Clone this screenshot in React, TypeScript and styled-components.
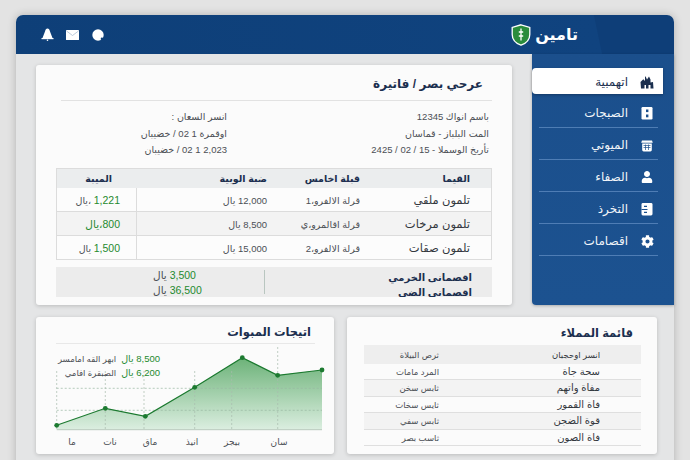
import * as React from 'react';
import styled, {createGlobalStyle} from 'styled-components';
import {FaCog, FaUser} from 'react-icons/fa';

const NAVY = '#1b2f4f';
const GREEN = '#1f8a2f';

const GlobalStyle = createGlobalStyle`
    html, body {
        margin: 0;
        height: 460px;
        overflow: hidden;
        background: #e3e3e3;
        font-family: "Liberation Sans", "DejaVu Sans", sans-serif;
    }
`;

const Window = styled.div`
    margin: 15px 16px 0;
    height: 460px;
    background: #e4e5e6;
    border-radius: 7px 7px 0 0;
    box-shadow: 0 0 8px rgba(0, 0, 0, 0.22);
    direction: rtl;
`;

const Header = styled.header`
    height: 39px;
    display: flex;
    align-items: center;
    justify-content: space-between;
    padding: 0 96px 0 25px;
    border-radius: 7px 7px 0 0;
    background: linear-gradient(258deg, #0e3e78 0, #0e3e78 78px, #10437f 79px, #0e3f78 100%);
`;

const Brand = styled.div`
    display: flex;
    align-items: center;
    gap: 4px;
    color: #fff;
    font-size: 16px;
    font-weight: bold;
`;

const HeaderIcons = styled.div`
    direction: ltr;
    display: flex;
    align-items: center;
    gap: 12px;
`;

const TopRow = styled.div`
    display: flex;
    align-items: flex-start;
`;

const Sidebar = styled.nav`
    width: 142px;
    height: 251px;
    box-sizing: border-box;
    padding-top: 14px;
    background: linear-gradient(180deg, #1b4f8c, #1c5290);
    border-radius: 0 0 0 4px;
    box-shadow: 0 1px 3px rgba(0, 0, 0, 0.25);
`;

const NavItem = styled.div<{$active?: boolean}>`
    display: flex;
    align-items: center;
    gap: 12px;
    box-sizing: border-box;
    height: ${p => (p.$active ? '26px' : '32px')};
    margin: ${p => (p.$active ? '0 11px 2px 0' : '0')};
    padding: 2px 20px 0 0;
    background: ${p => (p.$active ? '#fff' : 'transparent')};
    border-radius: ${p => (p.$active ? '4px 0 0 4px' : '0')};
    box-shadow: ${p => (p.$active ? '0 1px 3px rgba(0, 0, 0, 0.3)' : 'none')};
    color: ${p => (p.$active ? NAVY : '#f2f5f9')};
    font-size: 12px;
    position: relative;
    &::after {
        content: '';
        display: ${p => (p.$active ? 'none' : 'block')};
        position: absolute;
        left: 7px;
        right: 16px;
        bottom: 0;
        height: 1px;
        background: rgba(130, 170, 220, 0.5);
    }
`;

const NavIcon = styled.span<{$active?: boolean}>`
    width: 14px;
    display: flex;
    justify-content: center;
    color: ${p => (p.$active ? NAVY : '#fff')};
    margin-right: ${p => (p.$active ? '-11px' : '0')};
`;

const InvoiceCard = styled.section`
    width: 476px;
    height: 240px;
    box-sizing: border-box;
    margin: 11px 20px 0 0;
    padding: 0 20px;
    background: #fbfbfb;
    border-radius: 3px;
    box-shadow: 0 1px 4px rgba(0, 0, 0, 0.18);
`;

const InvoiceTitle = styled.h1`
    margin: 0 0 0 5px;
    height: 35px;
    padding-right: 9px;
    line-height: 38px;
    font-size: 12px;
    font-weight: bold;
    color: ${NAVY};
    border-bottom: 1px solid #e2e2e2;
`;

const InfoGrid = styled.div`
    display: grid;
    grid-template-columns: 262px 1fr;
    padding: 8px 3px 0 0;
    height: 59px;
`;

const InfoCol = styled.div`
    display: flex;
    flex-direction: column;
    font-size: 9.5px;
    line-height: 16.5px;
    color: #4b4f55;
`;

const Table = styled.div`
    display: grid;
    grid-template-columns: 121px 93px 140px 80px;
    border: 1px solid #dcdcdc;
    border-bottom: 0;
`;

const HeadCell = styled.div`
    height: 19px;
    line-height: 20px;
    padding-right: 10px;
    background: #ebedee;
    color: ${NAVY};
    font-size: 9.5px;
    font-weight: bold;
    &:nth-child(4n + 1) {
        padding-right: 21px;
    }
    &:nth-child(4n) {
        padding-right: 25px;
    }
`;

const Cell = styled.div<{$shade?: boolean; $big?: boolean; $sep?: boolean}>`
    height: 24px;
    box-sizing: border-box;
    line-height: 25px;
    padding-right: 10px;
    border-bottom: 1px solid #dcdcdc;
    border-right: ${p => (p.$sep ? '1px solid #dcdcdc' : '0')};
    background: ${p => (p.$shade ? '#f3f3f3' : '#fcfcfc')};
    color: ${p => (p.$big ? '#33383f' : '#4b4f55')};
    font-size: ${p => (p.$big ? '11.5px' : '9.5px')};
    white-space: nowrap;
    &:nth-child(4n + 1) {
        padding-right: 21px;
    }
    &:nth-child(4n) {
        padding-right: 16px;
    }
`;

const Money = styled.span`
    color: ${GREEN};
    font-size: 10.5px;
`;

const Summary = styled.div`
    margin-top: 7px;
    height: 30px;
    overflow: hidden;
    display: grid;
    grid-template-columns: 228px 1fr;
    background: #ececec;
`;

const SummaryLabels = styled.div`
    padding-right: 20px;
    border-left: 1px solid #b9c6c0;
    height: 24px;
    margin-top: 3px;
    color: ${NAVY};
    font-size: 10px;
    font-weight: bold;
    line-height: 15px;
    white-space: nowrap;
`;

const SummaryValues = styled.div`
    display: flex;
    flex-direction: column;
    align-items: flex-end;
    padding: 1px 0 0 97px;
    font-size: 10.5px;
    line-height: 15px;
    color: #4b4f55;
    white-space: nowrap;
`;

const BottomRow = styled.div`
    display: flex;
    gap: 13px;
    margin-top: 12px;
    padding: 0 17px 0 20px;
`;

const Card = styled.section<{$width: number}>`
    width: ${p => p.$width}px;
    height: 137px;
    background: #fbfbfb;
    border-radius: 3px;
    box-shadow: 0 1px 4px rgba(0, 0, 0, 0.18);
    position: relative;
    overflow: hidden;
`;

const ChartTitle = styled.h2`
    margin: 0 19px 0 20px;
    height: 26px;
    padding-right: 4px;
    line-height: 31px;
    border-bottom: 1px solid #e8e8e8;
    color: ${NAVY};
    font-size: 11.5px;
    font-weight: bold;
`;

const ChartSvg = styled.svg`
    display: block;
`;

const Legend = styled.div`
    position: absolute;
    left: 22px;
    top: 35px;
    width: 102px;
    display: flex;
    flex-direction: column;
    font-size: 8.5px;
    line-height: 14px;
    color: #4b4f55;
    white-space: nowrap;
`;

const LegendRow = styled.div`
    display: flex;
    gap: 5px;
`;

const LegendValue = styled.span`
    color: ${GREEN};
    font-size: 9.5px;
`;

const CustomersTitle = styled.h2`
    margin: 0;
    height: 28px;
    padding-right: 24px;
    line-height: 32px;
    color: ${NAVY};
    font-size: 11.5px;
    font-weight: bold;
`;

const CustomerTable = styled.div`
    margin: 0 16px 0 17px;
    display: grid;
    grid-template-columns: 193px 84px;
`;

const CustomerCell = styled.div<{$head?: boolean; $shade?: boolean}>`
    height: ${p => (p.$head ? '19px' : '16.4px')};
    box-sizing: border-box;
    line-height: ${p => (p.$head ? '20px' : '16px')};
    padding-right: 9px;
    background: ${p => (p.$head ? '#eeeeee' : p.$shade ? '#f3f3f3' : '#fbfbfb')};
    border-bottom: 1px solid ${p => (p.$head ? '#eeeeee' : '#dfdfdf')};
    color: #4b4f55;
    font-size: 8.5px;
    white-space: nowrap;
    &:nth-child(odd) {
        padding-right: 41px;
        color: #33383f;
        font-size: ${p => (p.$head ? '8.5px' : '10px')};
    }
`;

const navItems = [
    {label: 'الصبجات', icon: 'doc'},
    {label: 'الميوتي', icon: 'bin'},
    {label: 'الصفاء', icon: 'user'},
    {label: 'التخرذ', icon: 'box'},
    {label: 'اقصامات', icon: 'gear'}
];

const invoiceRows = [
    {name: 'تلمون ملقي', place: 'قرلة الالفرو،1', price: '12,000 يال', profit: '1,221', unit: ' ،يال', green: false},
    {name: 'تلمون مرخات', place: 'قرلة اقالمرو،ي', price: '8,500 يال', profit: '800،يال', unit: '', green: true},
    {name: 'تلمون صقات', place: 'قرلة الالفرو،2', price: '15,000 يال', profit: '1,500', unit: ' يال', green: false}
];

const customers = [
    ['سحة جاة', 'المرد مامات'],
    ['مفاة واتهم', 'ثابس سخن'],
    ['فاة القمور', 'ثايس سخات'],
    ['قوة الضجن', 'ثابس سفي'],
    ['فاة الصون', 'ثاسب بصر']
];

const chartPoints = [
    [20.7, 81.3],
    [69.3, 64.3],
    [109.3, 72.3],
    [158.7, 43.3],
    [206.3, 13.7],
    [241.7, 31.3],
    [286, 26]
];

const axisLabels = [
    ['ما', 36],
    ['نات', 74],
    ['ماق', 114],
    ['انيذ', 156],
    ['بيجز', 196],
    ['سان', 243]
] as const;

const gridX = [20.7, 69.3, 108, 158.7, 195.7, 241.7];

function NavGlyph({name}: {name: string}): JSX.Element {
    if (name === 'user') {
        return <FaUser size={12} />;
    }
    if (name === 'gear') {
        return <FaCog size={13} />;
    }
    if (name === 'doc') {
        return (
            <svg width="12" height="13" viewBox="0 0 12 13">
                <rect width="11" height="12.5" x="0.5" rx="1.2" fill="#fff" />
                <rect x="5" y="2.5" width="2.4" height="2.6" fill="#1b4f8c" />
                <rect x="5" y="7.5" width="2.4" height="2.8" fill="#1b4f8c" />
            </svg>
        );
    }
    if (name === 'bin') {
        return (
            <svg width="12" height="13" viewBox="0 0 12 13">
                <path d="M1 1.5h10l.8 2.2H.2z" fill="#fff" />
                <path d="M1.2 4.5h9.6v6.5a1.4 1.4 0 0 1-1.4 1.4H2.6A1.4 1.4 0 0 1 1.2 11z" fill="#fff" />
                <path d="M2.5 6.5h7M2.5 8.5h7M4.5 5.5v5.5M7.5 5.5v5.5" stroke="#1b4f8c" strokeWidth="0.7" />
            </svg>
        );
    }
    return (
        <svg width="12" height="13" viewBox="0 0 12 13">
            <rect width="11" height="12.5" x="0.5" rx="1.4" fill="#fff" />
            <path d="M0.5 6.5h6M3 3.4h3M3 9.4h3" stroke="#1b4f8c" strokeWidth="1.1" />
        </svg>
    );
}

function Chart(): JSX.Element {
    const line = chartPoints.map(p => p.join(',')).join(' ');
    const area = `20.7,85.7 ${line} 286,85.7`;

    return (
        <ChartSvg width="298" height="109" viewBox="0 0 298 109">
            <defs>
                <linearGradient id="areaFill" x1="0" y1="0" x2="0" y2="1">
                    <stop offset="0" stopColor="#6cb278" />
                    <stop offset="1" stopColor="#dbeee0" />
                </linearGradient>
            </defs>
            <polygon points={area} fill="url(#areaFill)" />
            <path d="M20.7 44.3H286M20.7 66.3H286" stroke="#9ab7a2" strokeWidth="0.7" strokeDasharray="2 2" />
            {gridX.map((x, i) => (
                <line key={x} x1={x} x2={x} y1={i === 5 ? 3 : 27} y2="85.7" stroke="#a9bcae" strokeWidth="0.7" strokeDasharray="2 2" />
            ))}
            <line x1="20.7" x2="286" y1="85.7" y2="85.7" stroke="#b9c9bd" />
            <polyline points={line} fill="none" stroke="#1c7a30" strokeWidth="1.2" />
            {chartPoints.map(([x, y]) => (
                <circle key={x} cx={x} cy={y} r="2.4" fill="#1c7a30" />
            ))}
            {axisLabels.map(([label, x]) => (
                <text key={label} x={x} y="101" fontSize="9" fill="#4b4f55" textAnchor="middle" fontFamily="DejaVu Sans, sans-serif">
                    {label}
                </text>
            ))}
        </ChartSvg>
    );
}

function App(): JSX.Element {
    return (
        <>
            <GlobalStyle />
            <Window>
                <Header>
                    <Brand>
                        <span>تامين</span>
                        <svg width="20" height="22" viewBox="0 0 20 22">
                            <path d="M10 .8l8.8 2.6v7c0 5.400-3.600 8.800-8.800 10.800C4.800 19.200 1.200 15.800 1.200 10.400v-7z" fill="#2a8c3c" stroke="#fff" strokeWidth="1.300" />
                            <path d="M10 4.500v12M7.800 8h4.400M7.800 12h4.400" stroke="#fff" strokeWidth="1.300" />
                        </svg>
                    </Brand>
                    <HeaderIcons>
                        <svg width="13" height="13" viewBox="0 0 13 13">
                            <path d="M6.500 0.500c1.400 0 2 1.200 2.500 3l2.500 6.500h-10l2.500-6.500c.5-1.800 1.100-3 2.500-3z" fill="#fff" />
                            <rect x="0.500" y="10" width="12" height="1.200" fill="#fff" />
                            <circle cx="6.500" cy="12.200" r="0.800" fill="#fff" />
                        </svg>
                        <svg width="13" height="10" viewBox="0 0 13 10">
                            <rect width="13" height="10" rx="0.600" fill="#fff" />
                            <path d="M0.500 1l6 4.500 6-4.500" stroke="#9fb4cc" strokeWidth="0.700" fill="none" />
                        </svg>
                        <svg width="12" height="12" viewBox="0 0 12 12" style={{marginLeft: 1}}>
                            <circle cx="6" cy="6" r="5.700" fill="#fff" />
                            <circle cx="9.900" cy="9.700" r="1.200" fill="#0f4079" />
                        </svg>
                    </HeaderIcons>
                </Header>
                <TopRow>
                    <Sidebar>
                        <NavItem $active>
                            <NavIcon $active>
                                <svg width="14" height="13" viewBox="0 0 14 13">
                                    <path d="M0.500 6l2.800-2.800L5 5V0.500h0.600L7 3.500 9 0.500 10.500 3.500V6.500L13 6l.5 6.500h-3V9H8.500v3.500H6V9H4.500v3.500H1z" fill={NAVY} />
                                </svg>
                            </NavIcon>
                            <span>اتهمبية</span>
                        </NavItem>
                        {navItems.map(item => (
                            <NavItem key={item.label}>
                                <NavIcon>
                                    <NavGlyph name={item.icon} />
                                </NavIcon>
                                <span>{item.label}</span>
                            </NavItem>
                        ))}
                    </Sidebar>
                    <InvoiceCard>
                        <InvoiceTitle>عرحي بصر / فاتيرة</InvoiceTitle>
                        <InfoGrid>
                            <InfoCol>
                                <span>باسم انواك 12345</span>
                                <span>المت البلباز - قماسان</span>
                                <span>تأريخ الوسملا - 15 / 02 / 2425</span>
                            </InfoCol>
                            <InfoCol>
                                <span>انسر السعان :</span>
                                <span>اوقمرة 1 02 / خضيبان</span>
                                <span>2,023 1 02 / خضيبان</span>
                            </InfoCol>
                        </InfoGrid>
                        <Table>
                            <HeadCell>القيما</HeadCell>
                            <HeadCell>قبلة اخامس</HeadCell>
                            <HeadCell>ضبة الوبية</HeadCell>
                            <HeadCell>الميبة</HeadCell>
                            {invoiceRows.map((row, i) => (
                                <React.Fragment key={row.name}>
                                    <Cell $big $shade={i === 1}>{row.name}</Cell>
                                    <Cell $shade={i === 1}>{row.place}</Cell>
                                    <Cell $shade={i === 1}>{row.price}</Cell>
                                    <Cell $sep $shade={i === 1}>
                                        <Money>{row.profit}</Money>
                                        {row.unit}
                                    </Cell>
                                </React.Fragment>
                            ))}
                        </Table>
                        <Summary>
                            <SummaryLabels>
                                <div>اقصمانى الخرمي</div>
                                <div>اقصمانى الضي</div>
                            </SummaryLabels>
                            <SummaryValues>
                                <div><Money>3,500</Money> يال</div>
                                <div><Money>36,500</Money> يال</div>
                            </SummaryValues>
                        </Summary>
                    </InvoiceCard>
                </TopRow>
                <BottomRow>
                    <Card $width={310}>
                        <CustomersTitle>قائمة المملاء</CustomersTitle>
                        <CustomerTable>
                            <CustomerCell $head>انسر اوحجبان</CustomerCell>
                            <CustomerCell $head>ثرص البيلاة</CustomerCell>
                            {customers.map(([name, contact], i) => (
                                <React.Fragment key={name}>
                                    <CustomerCell $shade={i % 2 === 1}>{name}</CustomerCell>
                                    <CustomerCell $shade={i % 2 === 1}>{contact}</CustomerCell>
                                </React.Fragment>
                            ))}
                        </CustomerTable>
                    </Card>
                    <Card $width={298}>
                        <ChartTitle>اتيجات المبوات</ChartTitle>
                        <Chart />
                        <Legend>
                            <LegendRow>
                                <LegendValue>8,500 يال</LegendValue>
                                <span>ابهر القه امامسر</span>
                            </LegendRow>
                            <LegendRow>
                                <LegendValue>6,200 يال</LegendValue>
                                <span>الصبقرة افامي</span>
                            </LegendRow>
                        </Legend>
                    </Card>
                </BottomRow>
            </Window>
        </>
    );
}

export default App;
